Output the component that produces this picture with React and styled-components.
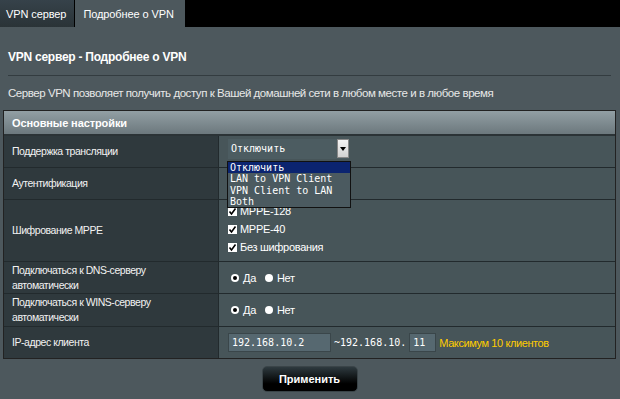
import React from 'react';
import styled, { createGlobalStyle } from 'styled-components';

const Global = createGlobalStyle`
  html, body { margin: 0; padding: 0; }
  body {
    width: 620px;
    height: 399px;
    overflow: hidden;
    background: #4d585d;
    font-family: "Liberation Sans", Arial, sans-serif;
    color: #fff;
  }
`;

const Page = styled.div`
  width: 620px;
  height: 399px;
  display: flex;
  flex-direction: column;
`;

const TabBar = styled.div`
  height: 27px;
  background: #000;
  display: flex;
`;

const Tab = styled.div`
  height: 27px;
  padding: 0 ${p => (p.active ? '11px' : '8px')} 0 ${p => (p.active ? '8px' : '6px')};
  margin-right: 1px;
  display: flex;
  align-items: center;
  font-size: 11px;
  letter-spacing: -0.1px;
  color: #fff;
  background: ${p => (p.active ? '#4d585d' : 'linear-gradient(#36424a, #2a3337)')};
`;

const Content = styled.div`
  padding: 0 4px 0 3px;
  display: flex;
  flex-direction: column;
`;

const Title = styled.div`
  font-size: 12px;
  font-weight: bold;
  letter-spacing: -0.25px;
  margin: 23px 0 0 5px;
  height: 15px;
`;

const Rule = styled.div`
  height: 1px;
  background: #333c40;
  margin: 10px 5px 0 5px;
`;

const Desc = styled.div`
  font-size: 11.5px;
  letter-spacing: -0.45px;
  color: #e8e8e8;
  margin: 11px 0 0 5px;
  height: 16px;
`;

const Table = styled.div`
  margin-top: 7px;
  border: 1px solid #222;
  display: flex;
  flex-direction: column;
`;

const Head = styled.div`
  height: 23px;
  border-bottom: 2px solid #2b3336;
  background: linear-gradient(#929fa4, #6c787d);
  font-size: 11px;
  font-weight: bold;
  letter-spacing: -0.1px;
  display: flex;
  align-items: center;
  padding-left: 8px;
`;

const Row = styled.div`
  display: grid;
  grid-template-columns: 215px 1fr;
  height: ${p => p.h}px;
  border-bottom: ${p => (p.last ? 'none' : '1px solid #222a2d')};
`;

const Label = styled.div`
  background: #2f393d;
  border-right: 1px solid #222a2d;
  font-size: 10.5px;
  letter-spacing: -0.45px;
  color: #f2f2f2;
  display: flex;
  align-items: center;
  padding-left: 8px;
  line-height: 15px;
`;

const Value = styled.div`
  background: #475559;
  display: flex;
  align-items: center;
  padding-left: 9px;
  font-size: 11px;
  letter-spacing: -0.3px;
  position: relative;
`;

const Checks = styled.div`
  background: #475559;
  display: flex;
  flex-direction: column;
  gap: 4px;
  padding: 4px 0 0 9px;
  font-size: 11px;
  letter-spacing: -0.3px;
`;

const Select = styled.div`
  width: 121px;
  height: 20px;
  margin-top: -6px;
  background: #4c5c61;
  display: flex;
  align-items: center;
  justify-content: space-between;
  font-family: "DejaVu Sans Mono", monospace;
  font-size: 10px;
  letter-spacing: 0;
  padding-left: 3px;
  box-sizing: border-box;
`;

const Arrow = styled.div`
  width: 12px;
  height: 19px;
  background: linear-gradient(#f4f4f4, #d2d2d2);
  border: 1px solid #888;
  box-sizing: border-box;
  display: flex;
  align-items: center;
  justify-content: center;
`;

const Menu = styled.div`
  position: absolute;
  left: 8px;
  top: 25px;
  width: 122px;
  background: #4b5a60;
  border: 1px solid #111;
  font-family: "DejaVu Sans Mono", monospace;
  font-size: 10px;
  letter-spacing: 0;
  z-index: 2;
`;

const Option = styled.div`
  height: 11.3px;
  line-height: 11px;
  padding-left: 2px;
  background: ${p => (p.sel ? '#0b2470' : 'transparent')};
  color: #fff;
`;

const Check = styled.div`
  display: flex;
  align-items: center;
  gap: 2px;
  height: 14px;
`;

const Box = styled.span`
  width: 9px;
  height: 9px;
  background: #fff;
  display: inline-flex;
  align-items: center;
  justify-content: center;
  margin-right: 1px;
`;

const Radio = styled.span`
  width: 8px;
  height: 8px;
  border-radius: 50%;
  background: #fff;
  display: inline-flex;
  align-items: center;
  justify-content: center;
  margin: 0 4px 0 3px;
  &::after {
    content: '';
    width: 4px;
    height: 4px;
    border-radius: 50%;
    background: ${p => (p.on ? '#000' : 'transparent')};
  }
`;

const RadioText = styled.span`
  margin-right: 6px;
`;

const Input = styled.div`
  width: ${p => p.w}px;
  height: 19px;
  background: #566870;
  border: 1px solid #3a464a;
  box-sizing: border-box;
  display: flex;
  align-items: center;
  padding-left: 3px;
  font-family: "DejaVu Sans Mono", monospace;
  font-size: 10px;
  letter-spacing: 0;
`;

const Between = styled.span`
  font-family: "DejaVu Sans Mono", monospace;
  font-size: 10px;
  letter-spacing: 0;
  margin: 0 3px 0 3px;
`;

const Hint = styled.span`
  color: #ffcc00;
  font-size: 11px;
  letter-spacing: -0.4px;
  margin-left: 3px;
`;

const Footer = styled.div`
  display: flex;
  justify-content: center;
  padding-top: 7px;
`;

const Button = styled.button`
  width: 96px;
  height: 26px;
  border: 1px solid #3a4448;
  border-radius: 5px;
  background: linear-gradient(#2e3a3f, #000 70%);
  color: #fff;
  font-family: "Liberation Sans", Arial, sans-serif;
  font-size: 11px;
  font-weight: bold;
  margin-left: 0;
`;

const Tick = () => (
  <svg width="9" height="9" viewBox="0 0 9 9">
    <path d="M1.5 4.5 L3.5 7 L7.5 1.5" stroke="#000" strokeWidth="1.6" fill="none" />
  </svg>
);

const App = () => {
  return (
    <Page>
      <Global />
      <TabBar>
        <Tab>VPN сервер</Tab>
        <Tab active>Подробнее о VPN</Tab>
      </TabBar>
      <Content>
        <Title>VPN сервер - Подробнее о VPN</Title>
        <Rule />
        <Desc>Сервер VPN позволяет получить доступ к Вашей домашней сети в любом месте и в любое время</Desc>
        <Table>
          <Head>Основные настройки</Head>
          <Row h={31}>
            <Label>Поддержка трансляции</Label>
            <Value>
              <Select>
                Отключить
                <Arrow>
                  <svg width="6" height="4" viewBox="0 0 6 4"><path d="M0 0h6L3 4z" fill="#000" /></svg>
                </Arrow>
              </Select>
              <Menu>
                <Option sel>Отключить</Option>
                <Option>LAN to VPN Client</Option>
                <Option>VPN Client to LAN</Option>
                <Option>Both</Option>
              </Menu>
            </Value>
          </Row>
          <Row h={31}>
            <Label>Аутентификация</Label>
            <Value />
          </Row>
          <Row h={61}>
            <Label>Шифрование MPPE</Label>
            <Checks>
              <Check><Box><Tick /></Box>MPPE-128</Check>
              <Check><Box><Tick /></Box>MPPE-40</Check>
              <Check><Box><Tick /></Box>Без шифрования</Check>
            </Checks>
          </Row>
          <Row h={31}>
            <Label>Подключаться к DNS-серверу<br />автоматически</Label>
            <Value>
              <Radio on /><RadioText>Да</RadioText>
              <Radio /><RadioText>Нет</RadioText>
            </Value>
          </Row>
          <Row h={32}>
            <Label>Подключаться к WINS-серверу<br />автоматически</Label>
            <Value>
              <Radio on /><RadioText>Да</RadioText>
              <Radio /><RadioText>Нет</RadioText>
            </Value>
          </Row>
          <Row h={31} last>
            <Label>IP-адрес клиента</Label>
            <Value>
              <Input w={103}>192.168.10.2</Input>
              <Between>~192.168.10.</Between>
              <Input w={27}>11</Input>
              <Hint>Максимум 10 клиентов</Hint>
            </Value>
          </Row>
        </Table>
        <Footer>
          <Button>Применить</Button>
        </Footer>
      </Content>
    </Page>
  );
};

export default App;
